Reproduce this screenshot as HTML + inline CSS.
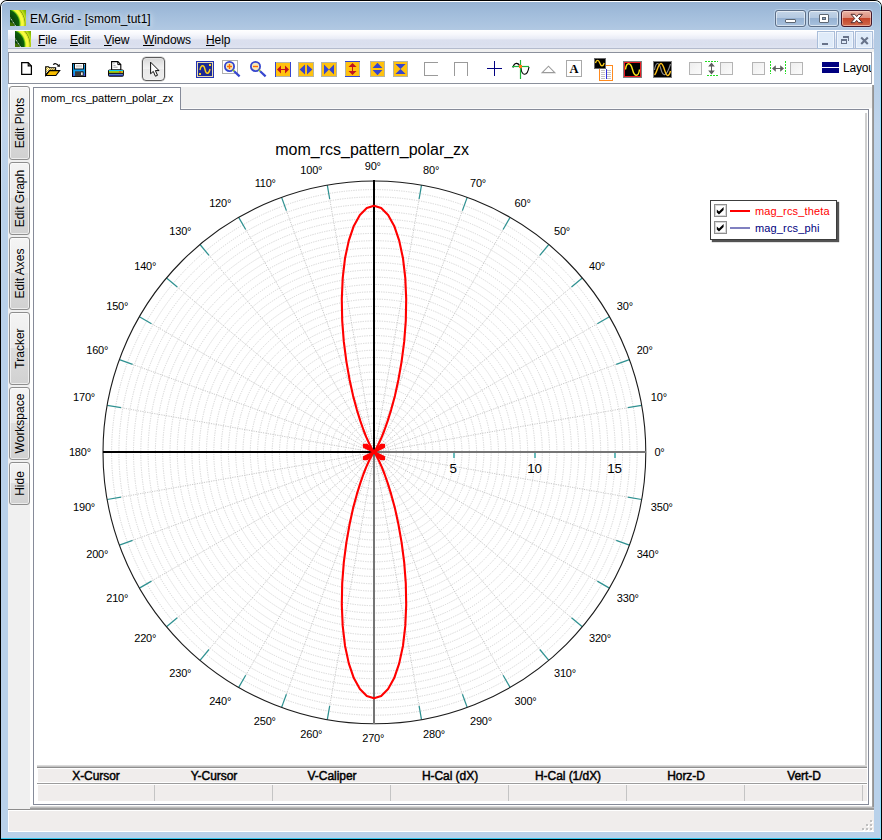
<!DOCTYPE html>
<html><head><meta charset="utf-8"><title>EM.Grid - [smom_tut1]</title>
<style>
html,body{margin:0;padding:0;background:#fff;}
body{width:882px;height:840px;position:relative;overflow:hidden;font-family:"Liberation Sans",sans-serif;font-size:12px;color:#000;}
.abs,div,i,svg{position:absolute;}
div,i{box-sizing:border-box;display:block;}
u{text-decoration:underline;text-decoration-thickness:1px;text-underline-offset:1px;}
.win{left:0;top:0;width:882px;height:840px;background:#000;border-radius:7px 7px 0 0;}
.winhl{left:1px;top:1px;width:880px;height:838px;border-radius:6px 6px 0 0;
  background:linear-gradient(to bottom,#96b2d3 0px,#a3bedc 14px,#b2c9e3 30px,#b6cde6 60px,#bfd4eb 125px,#b9d1ea 200px,#b9d1ea 100%);
  box-shadow:inset 0 1px 0 #fff,  inset -1px 0 0 #8fe0fb, inset 0 -1px 0 #35c7ee;}
.title{left:30px;top:11px;height:16px;line-height:16px;font-size:12px;letter-spacing:0px;white-space:nowrap;color:#000;text-shadow:0 0 5px rgba(255,255,255,.9),0 0 8px rgba(255,255,255,.7);}
.cbtn{top:10px;width:31px;height:17px;border:1px solid #5d6f88;border-radius:3px;
  background:linear-gradient(to bottom,#c4d5e8 0,#b4c9e1 45%,#96b2d3 50%,#a8c1dd 100%);
  box-shadow:inset 0 0 0 1px rgba(255,255,255,.55),0 0 0 1px rgba(200,220,240,.6);}
.cclose{border-color:#43172a;background:linear-gradient(to bottom,#eab4a6 0,#dc8f7f 45%,#c5452b 50%,#cf6a4c 100%);box-shadow:inset 0 0 0 1px rgba(255,220,210,.55),0 0 0 1px rgba(190,214,238,.8);}
.cmin{left:9px;top:8px;width:11px;height:4px;background:#fff;border:1px solid #5d6773;border-radius:1px;}
.cmax{left:10px;top:3px;width:10px;height:9px;background:#fff;border:1px solid #5d6773;border-radius:1px;}
.cmax:after{content:"";position:absolute;left:2px;top:2px;width:4px;height:3px;background:#8ea6c4;border:1px solid #5d6773;box-sizing:border-box;}
.menubar{left:8px;top:30px;width:866px;height:19px;background:linear-gradient(to bottom,#ffffff 0,#f6f7fc 25%,#e9ecf6 48%,#dce0ef 55%,#dadfee 80%,#dfe3f1 100%);border-bottom:1px solid #b4bbcd;}
.mi{top:33px;height:15px;line-height:15px;font-size:12px;letter-spacing:-0.1px;white-space:nowrap;}
.mbtn{top:31px;width:18px;height:18px;background:#dfebf9;border:1px solid #a9bdd9;box-shadow:inset 0 0 0 1px rgba(255,255,255,.5);}
.gray{background:#f0f0f0;}
.lhl{left:1px;top:6px;width:1px;height:300px;background:linear-gradient(to bottom,rgba(255,255,255,.95) 0,rgba(255,255,255,.8) 60px,rgba(255,255,255,.25) 180px,rgba(255,255,255,0) 300px);}

.stab{left:9px;width:21px;border:1px solid #8e8e8e;border-radius:3px;background:linear-gradient(to bottom,#f4f4f4 0,#ebebeb 49%,#dddddd 50%,#d1d1d1 100%);box-shadow:inset 0 0 0 1px rgba(255,255,255,.6);}
.stab span{position:absolute;display:block;height:19px;line-height:19px;text-align:center;font-size:12px;letter-spacing:0px;white-space:nowrap;transform-origin:0 0;transform:rotate(-90deg);}
.th{top:769px;height:15px;line-height:15px;text-align:center;font-weight:normal;font-size:12px;letter-spacing:-0.05px;white-space:nowrap;-webkit-text-stroke:0.45px #000;}
</style></head>
<body>
<div class="win"></div>
<div class="winhl"></div>
<div class="lhl"></div>
<svg class="abs" style="left:10px;top:10px" width="16" height="16" viewBox="0 0 16 16"><defs><radialGradient id="ig10" cx="-6" cy="14" r="26" gradientUnits="userSpaceOnUse"><stop offset="0" stop-color="#0a3a08"/><stop offset="0.42" stop-color="#0b4a0a"/><stop offset="0.575" stop-color="#0f600c"/><stop offset="0.615" stop-color="#6fc814"/><stop offset="0.655" stop-color="#f2f83a"/><stop offset="0.735" stop-color="#fdfd42"/><stop offset="0.785" stop-color="#cfe624"/><stop offset="0.805" stop-color="#8c9c12"/><stop offset="0.84" stop-color="#c4e21a"/><stop offset="0.92" stop-color="#8cc204"/><stop offset="1" stop-color="#76aa00"/></radialGradient></defs><rect width="16" height="16" fill="url(#ig10)"/><path d="M0 12 Q3 12.5 5 16 L0 16 Z" fill="#4a7800" opacity="0.85"/><path d="M0 7.5 L5.6 16" stroke="#ffffff" stroke-width="1" stroke-dasharray="1 0.8" opacity="0.95"/></svg>
<div class="title">EM.Grid - [smom_tut1]</div>
<div class="cbtn" style="left:775px"><i class="cmin"></i></div>
<div class="cbtn" style="left:808px"><i class="cmax"></i></div>
<div class="cbtn cclose" style="left:841px"><svg width="31" height="17" viewBox="0 0 31 17" style="position:absolute;left:-1px;top:-1px"><path d="M10 4.3 L13.8 4.3 L15.7 6.6 L17.6 4.3 L21.4 4.3 L17.7 8.5 L21.4 12.7 L17.6 12.7 L15.7 10.4 L13.8 12.7 L10 12.7 L13.7 8.5 Z" fill="#fff" stroke="#4e2626" stroke-width="1"/></svg></div>
<div class="menubar"></div>
<svg class="abs" style="left:15px;top:31px" width="16" height="16" viewBox="0 0 16 16"><defs><radialGradient id="ig31" cx="-6" cy="14" r="26" gradientUnits="userSpaceOnUse"><stop offset="0" stop-color="#0a3a08"/><stop offset="0.42" stop-color="#0b4a0a"/><stop offset="0.575" stop-color="#0f600c"/><stop offset="0.615" stop-color="#6fc814"/><stop offset="0.655" stop-color="#f2f83a"/><stop offset="0.735" stop-color="#fdfd42"/><stop offset="0.785" stop-color="#cfe624"/><stop offset="0.805" stop-color="#8c9c12"/><stop offset="0.84" stop-color="#c4e21a"/><stop offset="0.92" stop-color="#8cc204"/><stop offset="1" stop-color="#76aa00"/></radialGradient></defs><rect width="16" height="16" fill="url(#ig31)"/><path d="M0 12 Q3 12.5 5 16 L0 16 Z" fill="#4a7800" opacity="0.85"/><path d="M0 7.5 L5.6 16" stroke="#ffffff" stroke-width="1" stroke-dasharray="1 0.8" opacity="0.95"/></svg>
<div class="mi" style="left:38px"><u>F</u>ile</div>
<div class="mi" style="left:70px"><u>E</u>dit</div>
<div class="mi" style="left:104px"><u>V</u>iew</div>
<div class="mi" style="left:143px"><u>W</u>indows</div>
<div class="mi" style="left:206px"><u>H</u>elp</div>
<div class="mbtn" style="left:817px"><i style="left:4px;top:11px;width:6px;height:2px;background:#687389"></i></div>
<div class="mbtn" style="left:836px"><svg width="18" height="18" style="position:absolute;left:-1px;top:-1px" shape-rendering="crispEdges"><path d="M7 5 H13 V10 H12 V7 H7 Z" fill="#687389"/><path d="M5 8 H11 V13 H5 Z M6 10 V12 H10 V10 Z" fill="#687389" fill-rule="evenodd"/></svg></div>
<div class="mbtn" style="left:855px"><svg width="18" height="18" style="position:absolute;left:-1px;top:-1px"><path d="M6.2 6.5 L12.8 13 M12.8 6.5 L6.2 13" stroke="#687389" stroke-width="2.1"/></svg></div>
<div style="left:8px;top:49px;width:866px;height:783px;background:#f0f0f0"></div>
<div style="left:8px;top:52px;width:864px;height:32px;background:#fff;border:1px solid #8b909c;border-right-color:#a0a4ae"></div>
<div style="left:872px;top:52px;width:2px;height:33px;background:#fff"></div>
<div style="left:8px;top:84px;width:866px;height:3px;background:#fff"></div>
<div style="left:872px;top:85px;width:2px;height:725px;background:linear-gradient(to right,#a8a8a8,#8c8c8c)"></div>
<div style="left:30px;top:109px;width:842px;height:697px;background:#fff"></div>
<div style="left:30px;top:86px;width:4px;height:24px;background:#fff"></div>
<div style="left:33px;top:109px;width:836px;height:696px;background:#fff;border:1px solid #868b99"></div>
<div style="left:33px;top:87px;width:148px;height:23px;background:#fff;border:1px solid #868b99;border-bottom:none"></div>
<div style="left:181px;top:108px;width:691px;height:1px;background:#fbfbfb"></div>
<div style="left:41px;top:92px;font-size:11px;line-height:13px;white-space:nowrap;letter-spacing:-0.04px">mom_rcs_pattern_polar_zx</div>
<div style="left:865px;top:113px;width:2px;height:653px;background:#cfcfcf"></div>
<div class="stab" style="top:86px;height:74px"><span style="width:72px;left:1px;top:72px">Edit Plots</span></div>
<div class="stab" style="top:162px;height:73px"><span style="width:71px;left:1px;top:71px">Edit Graph</span></div>
<div class="stab" style="top:237px;height:73px"><span style="width:71px;left:1px;top:71px">Edit Axes</span></div>
<div class="stab" style="top:312px;height:73px"><span style="width:71px;left:1px;top:71px">Tracker</span></div>
<div class="stab" style="top:387px;height:73px"><span style="width:71px;left:1px;top:71px">Workspace</span></div>
<div class="stab" style="top:462px;height:43px"><span style="width:41px;left:1px;top:41px">Hide</span></div>
<div style="left:37px;top:765px;width:830px;height:1px;background:#dadada"></div>
<div style="left:37px;top:766px;width:830px;height:1px;background:#c2c2c2"></div>
<div style="left:37px;top:767px;width:830px;height:1px;background:#8e8e8e"></div>
<div style="left:38px;top:769px;width:829px;height:13px;background:#f0edec"></div>
<div style="left:37px;top:783px;width:830px;height:1px;background:#9c9c9c"></div>
<div style="left:38px;top:785px;width:829px;height:16px;background:#f0edec"></div>
<div class="th" style="left:37px;width:118px">X-Cursor</div>
<div style="left:154px;top:785px;width:1px;height:16px;background:#c4c4c4"></div>
<div class="th" style="left:155px;width:118px">Y-Cursor</div>
<div style="left:272px;top:785px;width:1px;height:16px;background:#c4c4c4"></div>
<div class="th" style="left:273px;width:118px">V-Caliper</div>
<div style="left:390px;top:785px;width:1px;height:16px;background:#c4c4c4"></div>
<div class="th" style="left:391px;width:118px">H-Cal (dX)</div>
<div style="left:508px;top:785px;width:1px;height:16px;background:#c4c4c4"></div>
<div class="th" style="left:509px;width:118px">H-Cal (1/dX)</div>
<div style="left:626px;top:785px;width:1px;height:16px;background:#c4c4c4"></div>
<div class="th" style="left:627px;width:118px">Horz-D</div>
<div style="left:744px;top:785px;width:1px;height:16px;background:#c4c4c4"></div>
<div class="th" style="left:745px;width:118px">Vert-D</div>
<div style="left:862px;top:785px;width:1px;height:16px;background:#c4c4c4"></div>
<div style="left:31px;top:806px;width:841px;height:1px;background:#d8d8d8"></div>
<div style="left:30px;top:807px;width:844px;height:1px;background:#bcbcbc"></div>
<div style="left:30px;top:808px;width:844px;height:2px;background:#9c9c9c"></div>
<div style="left:8px;top:809px;width:22px;height:1px;background:#8c8c8c"></div>
<div style="left:8px;top:810px;width:866px;height:22px;background:#f0edec;border:1px solid #fff;border-right:none"></div>
<div style="left:862px;top:820px;width:12px;height:12px"><i style="left:8px;top:0px;width:2px;height:2px;background:#c0c0c0;box-shadow:1px 1px 0 #fff"></i><i style="left:4px;top:4px;width:2px;height:2px;background:#c0c0c0;box-shadow:1px 1px 0 #fff"></i><i style="left:8px;top:4px;width:2px;height:2px;background:#c0c0c0;box-shadow:1px 1px 0 #fff"></i><i style="left:0px;top:8px;width:2px;height:2px;background:#c0c0c0;box-shadow:1px 1px 0 #fff"></i><i style="left:4px;top:8px;width:2px;height:2px;background:#c0c0c0;box-shadow:1px 1px 0 #fff"></i><i style="left:8px;top:8px;width:2px;height:2px;background:#c0c0c0;box-shadow:1px 1px 0 #fff"></i></div>
<svg class="abs" style="left:21px;top:62px" width="12" height="14" viewBox="0 0 12 14"><path d="M0.7 0.7 H7.2 L10.4 3.9 V12.4 H0.7 Z" fill="#fff" stroke="#000" stroke-width="1.25" stroke-linejoin="miter"/><path d="M7.2 0.7 V3.9 H10.4" fill="none" stroke="#000" stroke-width="1.1"/></svg>
<svg class="abs" style="left:45px;top:62px" width="16" height="15" viewBox="0 0 16 15"><defs><pattern id="dth" width="2" height="2" patternUnits="userSpaceOnUse"><rect width="2" height="2" fill="#fff"/><rect width="1" height="1" fill="#f7cd12"/><rect x="1" y="1" width="1" height="1" fill="#f7cd12"/></pattern></defs><path d="M0.7 13.4 V4.7 H3.4 L4.4 5.7 H10.6 V8.4 H4.6 Z" fill="url(#dth)" stroke="#000" stroke-width="1.1"/><path d="M0.8 13.5 L4.6 8.6 H14.7 L10.9 13.5 Z" fill="#f7bd00" stroke="#000" stroke-width="1.1"/><path d="M8.2 2.7 Q10.6 0.3 13.3 3.4" fill="none" stroke="#000" stroke-width="1.1"/><path d="M14.9 2.0 L14.7 5.0 L11.8 4.2 Z" fill="#000"/></svg>
<svg class="abs" style="left:72px;top:63px" width="15" height="14" viewBox="0 0 15 14"><rect x="0.5" y="0.5" width="13" height="13" fill="#0fa0f0" stroke="#000" stroke-width="1.2"/><rect x="2.5" y="0.5" width="9" height="5.5" fill="#fbfbfb" stroke="#000" stroke-width="0.9"/><rect x="4" y="2" width="6" height="2.4" fill="#d4d4d4"/><rect x="3" y="8.3" width="8.6" height="5" fill="#3a3a3a"/><rect x="8.8" y="9" width="2.2" height="3.6" fill="#fff" stroke="#000" stroke-width="0.6"/><rect x="1" y="10.5" width="1.2" height="2.6" fill="#5050e0"/><rect x="11.9" y="10.5" width="1.2" height="2.6" fill="#5050e0"/><rect x="12" y="1.2" width="0.9" height="0.9" fill="#d0d0d0"/></svg>
<svg class="abs" style="left:107px;top:61px" width="18" height="16" viewBox="0 0 18 16"><path d="M4.6 9 V0.6 H10.8 L13.8 3.6 V9 Z" fill="#fff" stroke="#000" stroke-width="1.1"/><path d="M10.8 0.6 V3.6 H13.8" fill="none" stroke="#000" stroke-width="1"/><path d="M6.4 2.6 H7.4 M6.4 4.4 H8.6 M6.4 6.2 H10.6" stroke="#9a9a9a" stroke-width="0.9"/><rect x="1" y="8.4" width="15.9" height="7.3" rx="1.6" fill="#050505"/><rect x="2" y="9.0" width="13.9" height="1.4" fill="#08ccf4"/><rect x="2" y="10.3" width="13.9" height="1.4" fill="#d4fa08"/><rect x="12" y="10.3" width="2.4" height="1.3" fill="#f03c14"/><rect x="14.4" y="10.3" width="1.5" height="1.3" fill="#f0d010"/><rect x="2" y="12.8" width="13.9" height="1.1" fill="#6a98d8"/><rect x="2" y="13.9" width="13.9" height="1.0" fill="#2434b4"/></svg>
<div style="left:142px;top:57px;width:23px;height:24px;border:1px solid #5c5c5c;border-radius:4px;background:linear-gradient(to bottom,#d6d6d6 0,#e9e9e9 30%,#f2f2f2 49%,#e8e8e8 51%,#ededed 100%);box-shadow:inset 0 0 0 1px rgba(255,255,255,.25),0 0 0 0.5px rgba(90,90,90,.35)"></div>
<svg class="abs" style="left:149px;top:61px" width="12" height="17" viewBox="0 0 12 17"><path d="M1.6 1.2 V12.8 L4.3 10.4 L6.4 15.2 L8.5 14.3 L6.4 9.6 L10 9.6 Z" fill="#fff" stroke="#000" stroke-width="0.95" stroke-linejoin="miter"/></svg>
<svg class="abs" style="left:196px;top:61px" width="18" height="17" viewBox="0 0 18 17" shape-rendering="crispEdges"><rect x="0" y="0" width="18" height="17" fill="#2535b5"/><rect x="1.5" y="1.5" width="15" height="14" fill="#1c2a96" stroke="#e8dcae" stroke-width="1"/><rect x="13" y="3" width="2" height="2" fill="#ffd21a"/><rect x="3" y="12" width="2" height="2" fill="#ffd21a"/><path d="M4 9 C5 3.5 8 3.5 9 8.5 C10 13.5 13 13.5 14 8" fill="none" stroke="#ffd21a" stroke-width="1.4" shape-rendering="auto"/></svg>
<svg class="abs" style="left:222px;top:60px" width="20" height="18" viewBox="0 0 20 18"><rect x="0.5" y="0.5" width="15" height="13" fill="none" stroke="#b0b0b0" stroke-width="1"/><circle cx="7.5" cy="6.5" r="4.6" fill="#f6e9b8" stroke="#3646cf" stroke-width="1.8"/><path d="M5 6.5 H10 M7.5 4 V9" stroke="#ff6a00" stroke-width="1.4"/><path d="M11 10 L12.4 11.4" stroke="#8fc62a" stroke-width="1.8"/><path d="M12.2 11.2 L17.6 16.4" stroke="#3646cf" stroke-width="2.2"/></svg>
<svg class="abs" style="left:248px;top:60px" width="20" height="18" viewBox="0 0 20 18"><circle cx="7.5" cy="6.5" r="4.6" fill="#f6e9b8" stroke="#3646cf" stroke-width="1.8"/><path d="M5 6.5 H10 " stroke="#ff6a00" stroke-width="1.4"/><path d="M11 10 L12.4 11.4" stroke="#8fc62a" stroke-width="1.8"/><path d="M12.2 11.2 L17.6 16.4" stroke="#3646cf" stroke-width="2.2"/></svg>
<svg class="abs" style="left:275px;top:62px" width="16" height="15" viewBox="0 0 16 15" shape-rendering="crispEdges"><rect x="0.5" y="0.5" width="15" height="14" fill="#ffc20e" stroke="#b4b4a8"/><rect x="0" y="0" width="1" height="15" fill="#3545d0"/><rect x="15" y="0" width="1" height="15" fill="#3545d0"/><path d="M2 7.5 L6 3.5 V11.5 Z M14 7.5 L10 3.5 V11.5 Z" fill="#c1121c" shape-rendering="auto"/><rect x="5" y="7" width="6" height="1.4" fill="#c1121c"/></svg>
<svg class="abs" style="left:298px;top:62px" width="16" height="15" viewBox="0 0 16 15" shape-rendering="crispEdges"><rect x="0.5" y="0.5" width="15" height="14" fill="#ffc20e" stroke="#b4b4a8"/><path d="M1.6 7.5 L7 2.6 V12.4 Z M14.4 7.5 L9 2.6 V12.4 Z" fill="#3545d0" shape-rendering="auto"/></svg>
<svg class="abs" style="left:321px;top:62px" width="16" height="15" viewBox="0 0 16 15" shape-rendering="crispEdges"><rect x="0.5" y="0.5" width="15" height="14" fill="#ffc20e" stroke="#b4b4a8"/><path d="M3 2.4 L8 7.5 L3 12.6 Z M13 2.4 L8 7.5 L13 12.6 Z" fill="#3545d0" shape-rendering="auto"/></svg>
<svg class="abs" style="left:345px;top:61px" width="15" height="16" viewBox="0 0 15 16" shape-rendering="crispEdges"><rect x="0.5" y="0.5" width="14" height="15" fill="#ffc20e" stroke="#b4b4a8"/><rect x="0" y="0" width="15" height="1" fill="#3545d0"/><rect x="0" y="15" width="15" height="1" fill="#3545d0"/><path d="M7.5 2 L3.5 6 H11.5 Z M7.5 14 L3.5 10 H11.5 Z" fill="#c1121c" shape-rendering="auto"/><rect x="6.8" y="5" width="1.4" height="6" fill="#c1121c"/></svg>
<svg class="abs" style="left:370px;top:61px" width="15" height="16" viewBox="0 0 15 16" shape-rendering="crispEdges"><rect x="0.5" y="0.5" width="14" height="15" fill="#ffc20e" stroke="#b4b4a8"/><path d="M7.5 1.8 L2.6 7 H12.4 Z M7.5 14.2 L2.6 9 H12.4 Z" fill="#3545d0" shape-rendering="auto"/></svg>
<svg class="abs" style="left:393px;top:61px" width="15" height="16" viewBox="0 0 15 16" shape-rendering="crispEdges"><rect x="0.5" y="0.5" width="14" height="15" fill="#ffc20e" stroke="#b4b4a8"/><path d="M2.4 3 L7.5 8 L12.6 3 Z M2.4 13 L7.5 8 L12.6 13 Z" fill="#3545d0" shape-rendering="auto"/></svg>
<svg class="abs" style="left:424px;top:62px" width="14" height="14" viewBox="0 0 14 14" shape-rendering="crispEdges"><path d="M14 0.5 H0.5 V13.5 H14" fill="none" stroke="#9a9a9a" stroke-width="1"/></svg>
<svg class="abs" style="left:454px;top:62px" width="14" height="14" viewBox="0 0 14 14" shape-rendering="crispEdges"><path d="M0.5 14 V0.5 H13.5 V14" fill="none" stroke="#9a9a9a" stroke-width="1"/></svg>
<svg class="abs" style="left:487px;top:61px" width="16" height="15" viewBox="0 0 16 15" shape-rendering="crispEdges"><rect x="0" y="7" width="15" height="1" fill="#000080"/><rect x="7" y="0" width="1" height="15" fill="#000080"/></svg>
<svg class="abs" style="left:512px;top:60px" width="18" height="19" viewBox="0 0 18 19"><path d="M1 7.6 C2.2 2.2 6.2 2.2 8 6.5 L9 8 C9.6 16.6 15.4 16.6 17 6.8" fill="none" stroke="#000" stroke-width="1.1"/><path d="M8.5 0 V19" stroke="#1fb53a" stroke-width="1.2"/><path d="M0 6.5 H17" stroke="#1fb53a" stroke-width="1.2"/><rect x="7" y="5" width="3" height="3" fill="#ff7a10"/></svg>
<svg class="abs" style="left:541px;top:65px" width="16" height="9" viewBox="0 0 16 9"><path d="M1.2 7.6 L7.5 1.2 L13.8 7.6 Z" fill="#fff" stroke="#9a9a9a" stroke-width="1.1"/></svg>
<svg class="abs" style="left:566px;top:60px" width="16" height="17" viewBox="0 0 16 17" shape-rendering="crispEdges"><rect x="0.5" y="0.5" width="15" height="16" fill="#fff" stroke="#a9a9a9" stroke-width="1"/><text x="8" y="12.8" font-family="Liberation Serif, serif" font-weight="bold" font-size="12.5" text-anchor="middle" fill="#000" shape-rendering="auto">A</text></svg>
<svg class="abs" style="left:594px;top:58px" width="20" height="23" viewBox="0 0 20 23" shape-rendering="crispEdges"><rect x="5.5" y="7.5" width="13" height="15" fill="#fff" stroke="#ff8a1e" stroke-width="1"/><path d="M7 12.5 H11 M7 14.5 H11 M7 16.5 H11 M7 18.5 H11 M7 20.5 H11 M13 12.5 H17 M13 14.5 H17 M13 16.5 H17 M13 18.5 H17 M13 20.5 H17" stroke="#c4c4c4" stroke-width="1"/><rect x="12" y="11" width="1" height="10" fill="#3030e0"/><rect x="0.5" y="0.5" width="11" height="10" fill="#000" stroke="#6a6a6a" stroke-width="1"/><path d="M1.5 5 C2.5 1.5 4.5 1.5 5.8 5 C7 8.8 9 8.8 10.2 5" fill="none" stroke="#ffd21a" stroke-width="1.3" shape-rendering="auto"/></svg>
<svg class="abs" style="left:623px;top:61px" width="19" height="17" viewBox="0 0 19 17" shape-rendering="crispEdges"><rect x="0.5" y="0.5" width="18" height="16" fill="#000" stroke="#808080" stroke-width="1"/><rect x="1.5" y="1.5" width="16" height="14" fill="#000" stroke="#e81c24" stroke-width="1"/><path d="M2.5 8.5 C3.5 0.8 7.5 0.8 9.5 8.5 C11.5 16.2 15.5 16.2 16.5 8.5" fill="none" stroke="#ffe818" stroke-width="1.4" shape-rendering="auto"/></svg>
<svg class="abs" style="left:653px;top:61px" width="19" height="17" viewBox="0 0 19 17" shape-rendering="crispEdges"><rect x="0.5" y="0.5" width="18" height="16" fill="#000" stroke="#808080" stroke-width="1"/><path d="M1.5 9 C3 0.5 6 0.5 8 8.5 C10 16 13.5 16 17.5 3" fill="none" stroke="#8c8c8c" stroke-width="1.1" shape-rendering="auto"/><path d="M1.5 14 C4 12 5 2.5 8 2.5 C11 2.5 12 14.5 14.5 14.5 C16 14.5 17 12 17.5 10" fill="none" stroke="#ffc21a" stroke-width="1.4" shape-rendering="auto"/></svg>
<div style="left:689px;top:62px;width:13px;height:13px;border:1px solid #b4b4b4;background:linear-gradient(135deg,#eeeeee,#fbfbfb)"></div>
<svg class="abs" style="left:705px;top:61px" width="14" height="15" viewBox="0 0 14 15" shape-rendering="crispEdges"><path d="M0 0.5 H13" stroke="#22dd22" stroke-width="1" stroke-dasharray="2 1"/><path d="M2 14.5 H13" stroke="#22dd22" stroke-width="1" stroke-dasharray="2 1"/><path d="M6.5 1.6 L3.2 5.4 H9.8 Z M6.5 13.4 L3.2 9.6 H9.8 Z" fill="#5e5e5e" shape-rendering="auto"/><rect x="5.8" y="5" width="1.4" height="5" fill="#5e5e5e"/></svg>
<div style="left:720px;top:62px;width:13px;height:13px;border:1px solid #b4b4b4;background:linear-gradient(135deg,#eeeeee,#fbfbfb)"></div>
<div style="left:752px;top:62px;width:13px;height:13px;border:1px solid #b4b4b4;background:linear-gradient(135deg,#eeeeee,#fbfbfb)"></div>
<svg class="abs" style="left:769px;top:61px" width="18" height="14" viewBox="0 0 18 14" shape-rendering="crispEdges"><path d="M1.5 0 V13" stroke="#22dd22" stroke-width="1" stroke-dasharray="2 1"/><path d="M16.5 0 V13" stroke="#22dd22" stroke-width="1" stroke-dasharray="2 1"/><path d="M3 7.5 L6.8 4.2 V10.8 Z M15 7.5 L11.2 4.2 V10.8 Z" fill="#5e5e5e" shape-rendering="auto"/><rect x="6" y="6.8" width="6" height="1.4" fill="#5e5e5e"/></svg>
<div style="left:790px;top:62px;width:13px;height:13px;border:1px solid #b4b4b4;background:linear-gradient(135deg,#eeeeee,#fbfbfb)"></div>
<div style="left:822px;top:62px;width:17px;height:5px;background:#000080"></div><div style="left:822px;top:68px;width:17px;height:5px;background:#000080"></div>
<div style="left:843px;top:60px;width:28px;height:16px;line-height:16px;font-size:12px;letter-spacing:-0.2px;overflow:hidden;white-space:nowrap">Layout</div>
<svg class="abs" style="left:0;top:0" width="882" height="840" viewBox="0 0 882 840">
<g fill="none" stroke="#d3d3d3" stroke-width="1" stroke-dasharray="1.2 1.2">
<circle cx="374.4" cy="452.4" r="7.30"/>
<circle cx="374.4" cy="452.4" r="14.60"/>
<circle cx="374.4" cy="452.4" r="21.90"/>
<circle cx="374.4" cy="452.4" r="29.20"/>
<circle cx="374.4" cy="452.4" r="36.50"/>
<circle cx="374.4" cy="452.4" r="43.80"/>
<circle cx="374.4" cy="452.4" r="51.10"/>
<circle cx="374.4" cy="452.4" r="58.40"/>
<circle cx="374.4" cy="452.4" r="65.70"/>
<circle cx="374.4" cy="452.4" r="73.00"/>
<circle cx="374.4" cy="452.4" r="80.30"/>
<circle cx="374.4" cy="452.4" r="87.60"/>
<circle cx="374.4" cy="452.4" r="94.90"/>
<circle cx="374.4" cy="452.4" r="102.20"/>
<circle cx="374.4" cy="452.4" r="109.50"/>
<circle cx="374.4" cy="452.4" r="116.80"/>
<circle cx="374.4" cy="452.4" r="124.10"/>
<circle cx="374.4" cy="452.4" r="131.40"/>
<circle cx="374.4" cy="452.4" r="138.70"/>
<circle cx="374.4" cy="452.4" r="146.00"/>
<circle cx="374.4" cy="452.4" r="153.30"/>
<circle cx="374.4" cy="452.4" r="160.60"/>
<circle cx="374.4" cy="452.4" r="167.90"/>
<circle cx="374.4" cy="452.4" r="175.20"/>
<circle cx="374.4" cy="452.4" r="182.50"/>
<circle cx="374.4" cy="452.4" r="189.80"/>
<circle cx="374.4" cy="452.4" r="197.10"/>
<circle cx="374.4" cy="452.4" r="204.40"/>
<circle cx="374.4" cy="452.4" r="211.70"/>
<circle cx="374.4" cy="452.4" r="219.00"/>
<circle cx="374.4" cy="452.4" r="226.30"/>
<circle cx="374.4" cy="452.4" r="233.60"/>
<circle cx="374.4" cy="452.4" r="240.90"/>
<circle cx="374.4" cy="452.4" r="248.20"/>
<circle cx="374.4" cy="452.4" r="255.50"/>
<circle cx="374.4" cy="452.4" r="262.80"/>
</g>
<g stroke="#c9c9c9" stroke-width="1" stroke-dasharray="1.2 1.2">
<line x1="378.3" y1="451.7" x2="627.8" y2="407.7"/>
<line x1="378.2" y1="451.0" x2="616.2" y2="364.4"/>
<line x1="377.9" y1="450.4" x2="597.3" y2="323.7"/>
<line x1="377.5" y1="449.8" x2="571.5" y2="287.0"/>
<line x1="377.0" y1="449.3" x2="539.8" y2="255.3"/>
<line x1="376.4" y1="448.9" x2="503.1" y2="229.5"/>
<line x1="375.8" y1="448.6" x2="462.4" y2="210.6"/>
<line x1="375.1" y1="448.5" x2="419.1" y2="199.0"/>
<line x1="373.7" y1="448.5" x2="329.7" y2="199.0"/>
<line x1="373.0" y1="448.6" x2="286.4" y2="210.6"/>
<line x1="372.4" y1="448.9" x2="245.7" y2="229.5"/>
<line x1="371.8" y1="449.3" x2="209.0" y2="255.3"/>
<line x1="371.3" y1="449.8" x2="177.3" y2="287.0"/>
<line x1="370.9" y1="450.4" x2="151.5" y2="323.7"/>
<line x1="370.6" y1="451.0" x2="132.6" y2="364.4"/>
<line x1="370.5" y1="451.7" x2="121.0" y2="407.7"/>
<line x1="370.5" y1="453.1" x2="121.0" y2="497.1"/>
<line x1="370.6" y1="453.8" x2="132.6" y2="540.4"/>
<line x1="370.9" y1="454.4" x2="151.5" y2="581.1"/>
<line x1="371.3" y1="455.0" x2="177.3" y2="617.8"/>
<line x1="371.8" y1="455.5" x2="209.0" y2="649.5"/>
<line x1="372.4" y1="455.9" x2="245.7" y2="675.3"/>
<line x1="373.0" y1="456.2" x2="286.4" y2="694.2"/>
<line x1="373.7" y1="456.3" x2="329.7" y2="705.8"/>
<line x1="375.1" y1="456.3" x2="419.1" y2="705.8"/>
<line x1="375.8" y1="456.2" x2="462.4" y2="694.2"/>
<line x1="376.4" y1="455.9" x2="503.1" y2="675.3"/>
<line x1="377.0" y1="455.5" x2="539.8" y2="649.5"/>
<line x1="377.5" y1="455.0" x2="571.5" y2="617.8"/>
<line x1="377.9" y1="454.4" x2="597.3" y2="581.1"/>
<line x1="378.2" y1="453.8" x2="616.2" y2="540.4"/>
<line x1="378.3" y1="453.1" x2="627.8" y2="497.1"/>
</g>
<g stroke="#2f9191" stroke-width="1.25">
<line x1="627.8" y1="407.7" x2="641.6" y2="405.3"/>
<line x1="616.2" y1="364.4" x2="629.4" y2="359.6"/>
<line x1="597.3" y1="323.7" x2="609.4" y2="316.7"/>
<line x1="571.5" y1="287.0" x2="582.3" y2="278.0"/>
<line x1="539.8" y1="255.3" x2="548.8" y2="244.5"/>
<line x1="503.1" y1="229.5" x2="510.1" y2="217.4"/>
<line x1="462.4" y1="210.6" x2="467.2" y2="197.4"/>
<line x1="419.1" y1="199.0" x2="421.5" y2="185.2"/>
<line x1="329.7" y1="199.0" x2="327.3" y2="185.2"/>
<line x1="286.4" y1="210.6" x2="281.6" y2="197.4"/>
<line x1="245.7" y1="229.5" x2="238.7" y2="217.4"/>
<line x1="209.0" y1="255.3" x2="200.0" y2="244.5"/>
<line x1="177.3" y1="287.0" x2="166.5" y2="278.0"/>
<line x1="151.5" y1="323.7" x2="139.4" y2="316.7"/>
<line x1="132.6" y1="364.4" x2="119.4" y2="359.6"/>
<line x1="121.0" y1="407.7" x2="107.2" y2="405.3"/>
<line x1="121.0" y1="497.1" x2="107.2" y2="499.5"/>
<line x1="132.6" y1="540.4" x2="119.4" y2="545.2"/>
<line x1="151.5" y1="581.1" x2="139.4" y2="588.1"/>
<line x1="177.3" y1="617.8" x2="166.5" y2="626.8"/>
<line x1="209.0" y1="649.5" x2="200.0" y2="660.3"/>
<line x1="245.7" y1="675.3" x2="238.7" y2="687.4"/>
<line x1="286.4" y1="694.2" x2="281.6" y2="707.4"/>
<line x1="329.7" y1="705.8" x2="327.3" y2="719.6"/>
<line x1="419.1" y1="705.8" x2="421.5" y2="719.6"/>
<line x1="462.4" y1="694.2" x2="467.2" y2="707.4"/>
<line x1="503.1" y1="675.3" x2="510.1" y2="687.4"/>
<line x1="539.8" y1="649.5" x2="548.8" y2="660.3"/>
<line x1="571.5" y1="617.8" x2="582.3" y2="626.8"/>
<line x1="597.3" y1="581.1" x2="609.4" y2="588.1"/>
<line x1="616.2" y1="540.4" x2="629.4" y2="545.2"/>
<line x1="627.8" y1="497.1" x2="641.6" y2="499.5"/>
</g>
<circle cx="374.4" cy="452.4" r="271.4" fill="none" stroke="#1c1c1c" stroke-width="1.1"/>
<g shape-rendering="crispEdges">
<rect x="373" y="451" width="273" height="2" fill="#757575"/>
<rect x="373" y="451" width="2" height="273" fill="#757575"/>
<rect x="103" y="451" width="272" height="2" fill="#000"/>
<rect x="373" y="180" width="2" height="273" fill="#000"/>
<rect x="453" y="453" width="2" height="5" fill="#69bcbc"/>
<rect x="534" y="453" width="2" height="5" fill="#69bcbc"/>
<rect x="614" y="453" width="2" height="5" fill="#69bcbc"/>
<rect x="373" y="453" width="2" height="3" fill="#2f9191"/>
</g>
<path d="M374.5 451.3 L374.9 450.7 L375.5 449.7 L376.5 448.1 L377.8 445.6 L379.5 442.0 L381.8 436.9 L384.5 430.0 L387.7 420.9 L391.2 409.6 L394.9 395.9 L398.4 379.8 L401.6 361.6 L404.2 341.7 L405.8 320.6 L406.2 299.1 L405.3 278.1 L403.0 258.3 L399.2 240.6 L394.2 225.9 L388.1 214.9 L381.2 208.0 L374.0 205.7 L366.8 208.0 L359.9 214.9 L353.8 225.9 L348.8 240.6 L345.0 258.3 L342.7 278.1 L341.8 299.1 L342.2 320.6 L343.8 341.7 L346.4 361.6 L349.6 379.8 L353.1 395.9 L356.8 409.6 L360.3 420.9 L363.5 430.0 L366.2 436.9 L368.5 442.0 L370.2 445.6 L371.5 448.1 L372.5 449.7 L373.1 450.7 L373.5 451.3 L374.0 452.0 L373.5 452.7 L373.1 453.3 L372.5 454.3 L371.5 455.9 L370.2 458.4 L368.5 462.0 L366.2 467.1 L363.5 474.0 L360.3 483.1 L356.8 494.4 L353.1 508.1 L349.6 524.2 L346.4 542.4 L343.8 562.3 L342.2 583.4 L341.8 604.9 L342.7 625.9 L345.0 645.7 L348.8 663.4 L353.8 678.1 L359.9 689.1 L366.8 696.0 L374.0 698.3 L381.2 696.0 L388.1 689.1 L394.2 678.1 L399.2 663.4 L403.0 645.7 L405.3 625.9 L406.2 604.9 L405.8 583.4 L404.2 562.3 L401.6 542.4 L398.4 524.2 L394.9 508.1 L391.2 494.4 L387.7 483.1 L384.5 474.0 L381.8 467.1 L379.5 462.0 L377.8 458.4 L376.5 455.9 L375.5 454.3 L374.9 453.3 L374.5 452.7 L374.0 452.0Z" fill="none" stroke="#ff0000" stroke-width="2.1" stroke-linejoin="round"/>
<path d="M374.0 452.0 L381.0 459.3 L384.1 459.3 L384.1 457.0 Z M374.0 452.0 L381.0 444.7 L384.1 444.7 L384.1 447.0 Z M374.0 452.0 L367.0 459.3 L363.9 459.3 L363.9 457.0 Z M374.0 452.0 L367.0 444.7 L363.9 444.7 L363.9 447.0 Z" fill="#ff0000" stroke="#ff0000" stroke-width="2.1" stroke-linejoin="round"/>
<g font-family="Liberation Sans, sans-serif" fill="#000">
<text x="372.2" y="154.5" font-size="16" text-anchor="middle">mom_rcs_pattern_polar_zx</text>
<text x="453.3" y="472.6" font-size="13.33" text-anchor="middle">5</text>
<text x="534.6" y="472.6" font-size="13.33" text-anchor="middle">10</text>
<text x="614.6" y="472.6" font-size="13.33" text-anchor="middle">15</text>
<g font-size="11" letter-spacing="-0.2">
<text x="654.4" y="456.0" text-anchor="start">0°</text>
<text x="90.9" y="456.0" text-anchor="end">180°</text>
<text x="650.8" y="400.8" text-anchor="start">10°</text>
<text x="650.8" y="511.2" text-anchor="start">350°</text>
<text x="95.0" y="400.8" text-anchor="end">170°</text>
<text x="95.0" y="511.2" text-anchor="end">190°</text>
<text x="636.7" y="354.2" text-anchor="start">20°</text>
<text x="636.7" y="557.8" text-anchor="start">340°</text>
<text x="108.2" y="354.2" text-anchor="end">160°</text>
<text x="108.2" y="557.8" text-anchor="end">200°</text>
<text x="616.8" y="309.6" text-anchor="start">30°</text>
<text x="616.8" y="602.4" text-anchor="start">330°</text>
<text x="128.2" y="309.6" text-anchor="end">150°</text>
<text x="128.2" y="602.4" text-anchor="end">210°</text>
<text x="589.0" y="270.2" text-anchor="start">40°</text>
<text x="589.0" y="641.8" text-anchor="start">320°</text>
<text x="156.2" y="270.2" text-anchor="end">140°</text>
<text x="156.2" y="641.8" text-anchor="end">220°</text>
<text x="554.0" y="235.0" text-anchor="start">50°</text>
<text x="554.0" y="677.0" text-anchor="start">310°</text>
<text x="191.3" y="235.0" text-anchor="end">130°</text>
<text x="191.3" y="677.0" text-anchor="end">230°</text>
<text x="514.6" y="207.4" text-anchor="start">60°</text>
<text x="514.6" y="704.6" text-anchor="start">300°</text>
<text x="231.1" y="207.4" text-anchor="end">120°</text>
<text x="231.1" y="704.6" text-anchor="end">240°</text>
<text x="470.0" y="187.2" text-anchor="start">70°</text>
<text x="470.0" y="724.8" text-anchor="start">290°</text>
<text x="275.8" y="187.2" text-anchor="end">110°</text>
<text x="275.8" y="724.8" text-anchor="end">250°</text>
<text x="423.1" y="174.0" text-anchor="start">80°</text>
<text x="423.1" y="738.0" text-anchor="start">280°</text>
<text x="322.3" y="174.0" text-anchor="end">100°</text>
<text x="322.3" y="738.0" text-anchor="end">260°</text>
<text x="372.8" y="170.0" text-anchor="middle">90°</text>
<text x="373.2" y="742.0" text-anchor="middle">270°</text>
</g></g>
</svg>
<div style="left:710px;top:200px;width:127px;height:40px;background:#fff;border:1px solid #3c3c3c;box-shadow:2px 2px 1px rgba(40,40,40,.8)"></div>
<svg class="abs" style="left:714px;top:204px" width="13" height="13" viewBox="0 0 13 13" shape-rendering="crispEdges"><rect x="0.5" y="0.5" width="12" height="12" fill="#fff" stroke="#8f8f8f"/><rect x="1.5" y="1.5" width="10" height="10" fill="none" stroke="#d8d8d8"/><path d="M2.8 5.4 L5 7.6 L9.6 3 L9.6 6 L5 10.6 L2.8 8.4 Z" fill="#000" shape-rendering="auto"/></svg>
<svg class="abs" style="left:714px;top:221px" width="13" height="13" viewBox="0 0 13 13" shape-rendering="crispEdges"><rect x="0.5" y="0.5" width="12" height="12" fill="#fff" stroke="#8f8f8f"/><rect x="1.5" y="1.5" width="10" height="10" fill="none" stroke="#d8d8d8"/><path d="M2.8 5.4 L5 7.6 L9.6 3 L9.6 6 L5 10.6 L2.8 8.4 Z" fill="#000" shape-rendering="auto"/></svg>
<div style="left:730px;top:210px;width:20px;height:2px;background:#ff0000"></div>
<div style="left:730px;top:227px;width:20px;height:2px;background:#8080c0;height:1.5px"></div>
<div style="left:755px;top:205px;font-size:11px;line-height:13px;color:#ff0000;white-space:nowrap;letter-spacing:0.15px">mag_rcs_theta</div>
<div style="left:755px;top:222px;font-size:11px;line-height:13px;color:#000080;white-space:nowrap;letter-spacing:0.15px">mag_rcs_phi</div>
</body></html>
